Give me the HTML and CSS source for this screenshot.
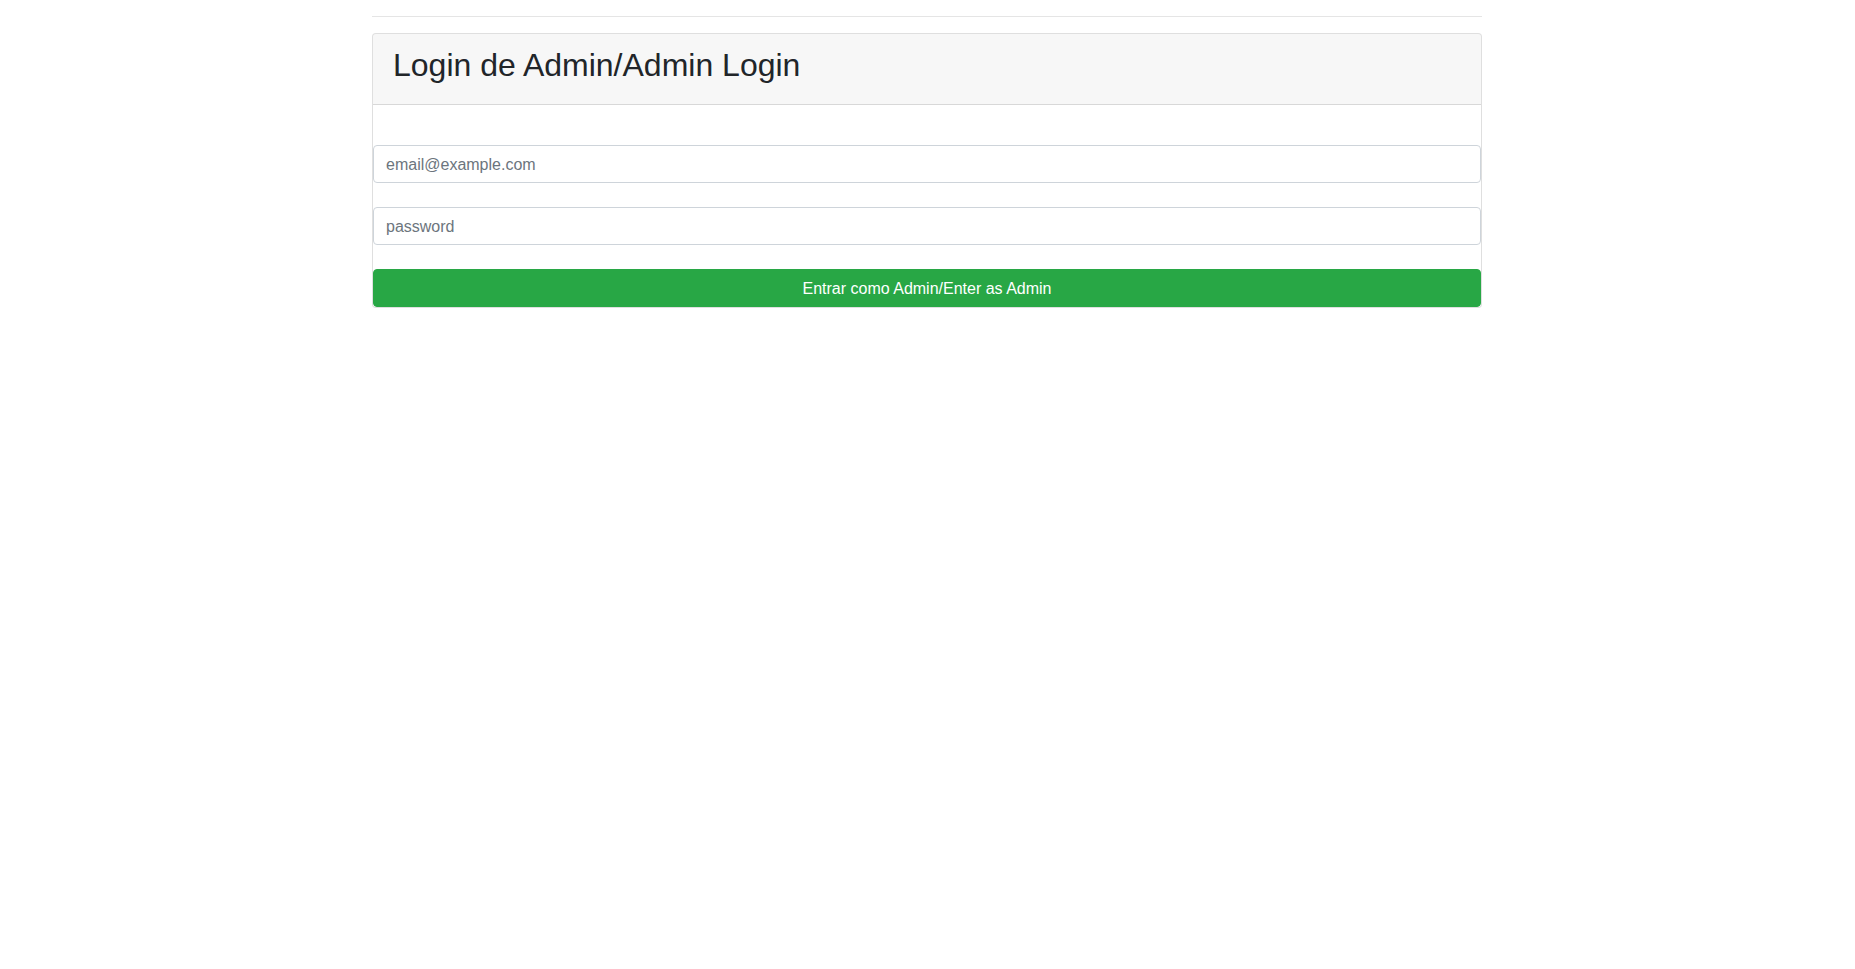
FILE: index.html
```html
<!DOCTYPE html>
<html lang="pt">
<head>
<meta charset="utf-8">
<title>Login de Admin</title>
<link rel="stylesheet" href="styles.css">
</head>
<body>
<div class="container">
  <hr class="rule">
  <div class="card">
    <div class="card-header">
      <h2 class="title">Login de Admin/Admin Login</h2>
    </div>
    <form class="login-form">
      <input class="field" type="email" placeholder="email@example.com">
      <input class="field" type="password" placeholder="password">
      <button class="btn-success" type="button">Entrar como Admin/Enter as Admin</button>
    </form>
  </div>
</div>
</body>
</html>
```

FILE: styles.css
```css
* { box-sizing: border-box; }
html, body { margin: 0; padding: 0; background: #fff; }
body {
  font-family: "Liberation Sans", Arial, sans-serif;
  font-size: 16px;
  line-height: 1.5;
  color: #212529;
}
.container {
  width: 1139px;
  margin: 0 auto;
  padding: 0 15px 0 14px;
}
.rule {
  margin: 16px 0;
  border: 0;
  border-top: 1px solid rgba(0,0,0,0.1);
  height: 0;
}
.card {
  border: 1px solid rgba(0,0,0,0.125);
  border-radius: 4px;
  overflow: hidden;
  background: #fff;
}
.card-header {
  background: rgba(0,0,0,0.03);
  border-bottom: 1px solid rgba(0,0,0,0.125);
  padding: 12px 20px;
}
.title {
  margin: 0 0 8px;
  font-size: 32px;
  font-weight: 500;
  line-height: 1.2;
  color: #212529;
}
.login-form {
  display: flex;
  flex-direction: column;
  gap: 24px;
  padding-top: 40px;
}
.field {
  display: block;
  width: 100%;
  height: 38px;
  padding: 7px 12px 5px;
  font-family: inherit;
  font-size: 16px;
  line-height: 1.5;
  color: #495057;
  background: #fff;
  border: 1px solid #ced4da;
  border-radius: 4px;
  outline: none;
}
.field::placeholder { color: #6c757d; opacity: 1; }
.btn-success {
  display: block;
  width: 100%;
  height: 38px;
  padding: 7px 12px 5px;
  font-family: inherit;
  font-size: 16px;
  line-height: 1.5;
  color: #fff;
  background: #28a745;
  border: 1px solid #28a745;
  border-radius: 4px;
  text-align: center;
  cursor: pointer;
}
```
